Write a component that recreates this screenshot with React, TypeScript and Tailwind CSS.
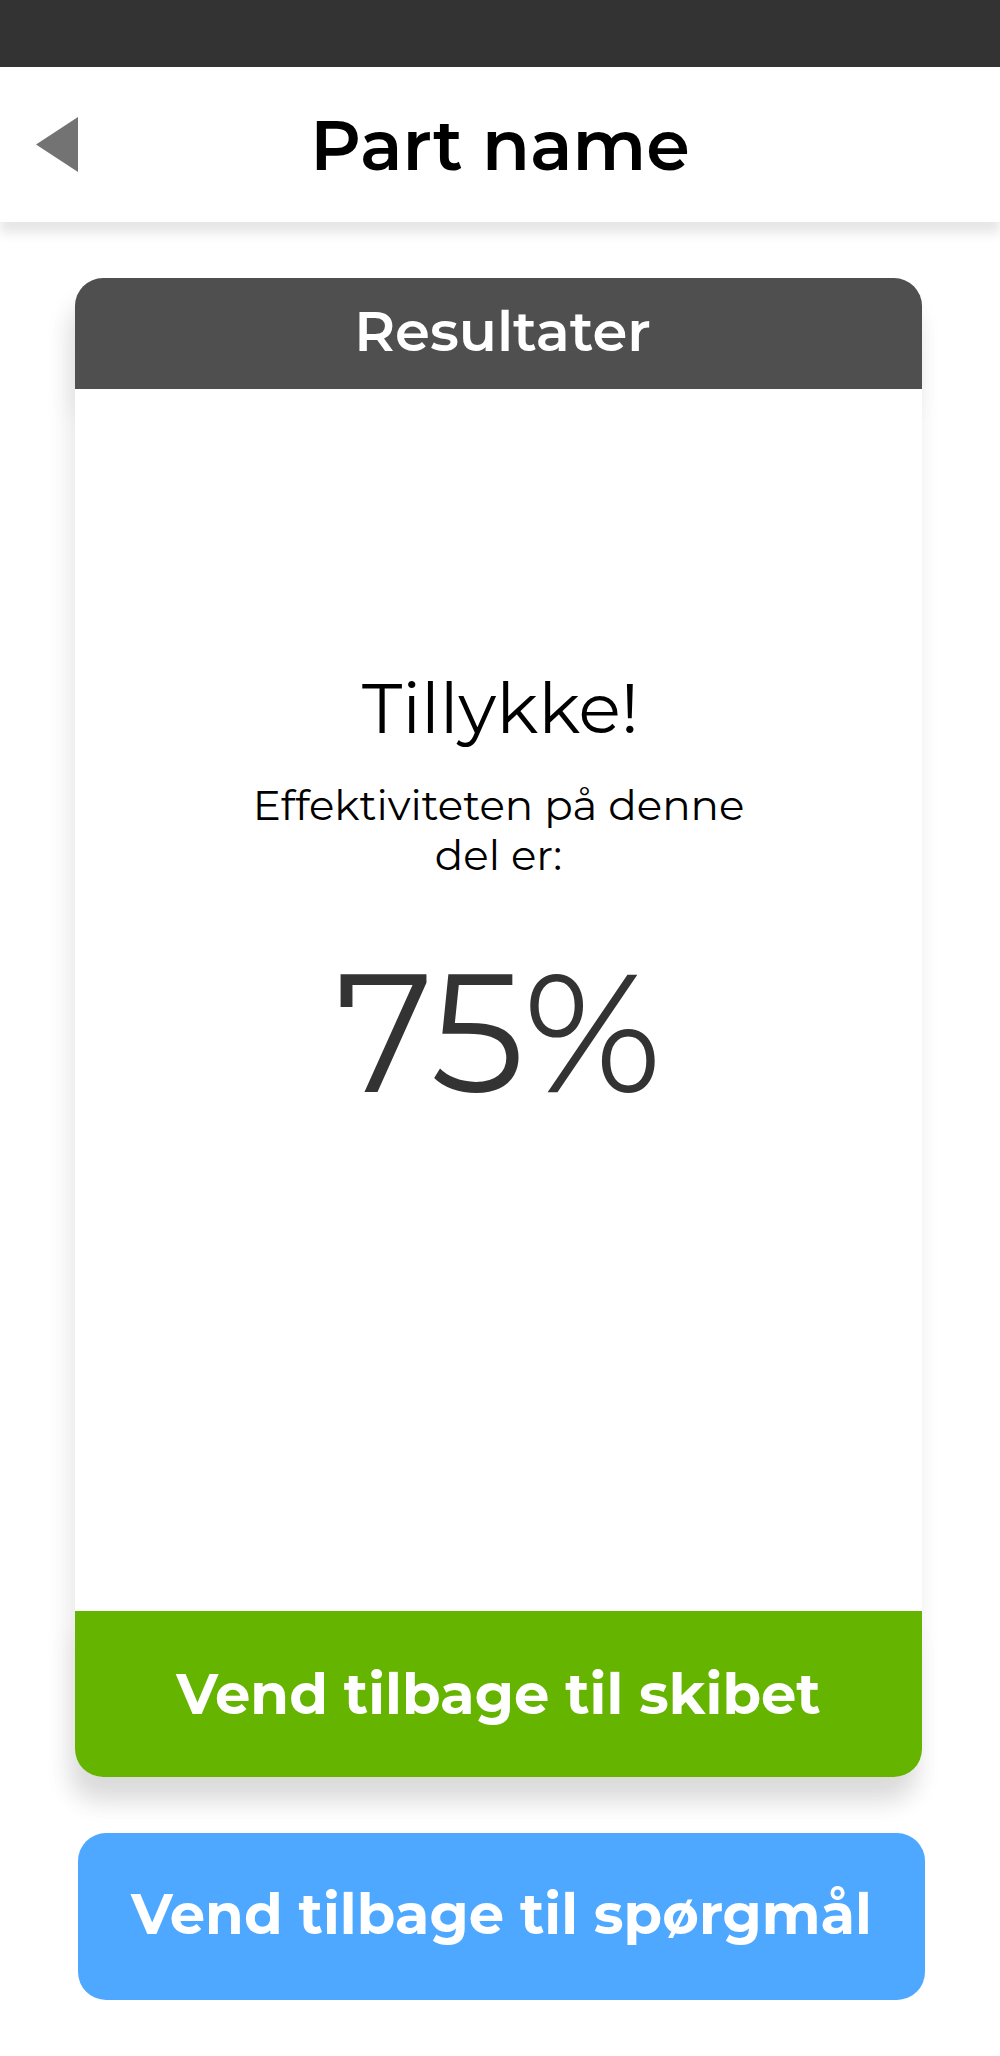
export default function App() {
  return (
    <div className="flex min-h-screen flex-col bg-white font-['Montserrat','Inter',sans-serif] text-black">
      <div className="h-[67px] bg-[#333333]" />
      <header className="grid h-[155px] grid-cols-[100px_1fr_100px] items-center bg-white shadow-[0_11px_11px_rgba(0,0,0,0.1)]">
        <button type="button" aria-label="Tilbage" className="flex h-full items-center pl-9">
          <svg viewBox="0 0 42 56" className="h-14 w-[42px]" aria-hidden="true">
            <path d="M42 0V55L0 27.5Z" fill="#737373" />
          </svg>
        </button>
        <h1 className="text-center text-[70px] leading-[88px] font-semibold">Part name</h1>
      </header>

      <main className="flex grow flex-col gap-14 px-[75px] pt-14 pb-14">
        <section className="mr-[3px] flex grow flex-col rounded-[28px] shadow-[-5px_24px_26px_rgba(0,0,0,0.1)]">
          <h2 className="flex h-[111px] items-center justify-center rounded-t-[28px] bg-[#4f4f4f] pb-1.5 pl-2 text-[56px] leading-[68px] font-semibold text-white shadow-[-5px_24px_26px_rgba(0,0,0,0.05)]">
            Resultater
          </h2>
          <div className="relative flex grow flex-col items-center bg-white pt-[275px] text-center">
            <p className="pl-1 text-[70px] leading-[88px]">Tillykke!</p>
            <p className="mt-7 w-[520px] text-[42px] leading-[50px]">Effektiviteten på denne del er:</p>
            <p className="mt-[52px] text-[167px] leading-[200px] text-[#333333]">75%</p>
          </div>
          <button
            type="button"
            className="h-[166px] rounded-b-[28px] bg-[#64b400] text-[56px] leading-[68px] font-bold text-white shadow-[-5px_24px_26px_rgba(0,0,0,0.05)]"
          >
            Vend tilbage til skibet
          </button>
        </section>
        <button
          type="button"
          className="ml-[3px] h-[167px] rounded-[28px] bg-[#4fa8ff] pb-1.5 text-[56px] leading-[68px] font-bold text-white"
        >
          Vend tilbage til spørgmål
        </button>
      </main>
    </div>
  );
}
